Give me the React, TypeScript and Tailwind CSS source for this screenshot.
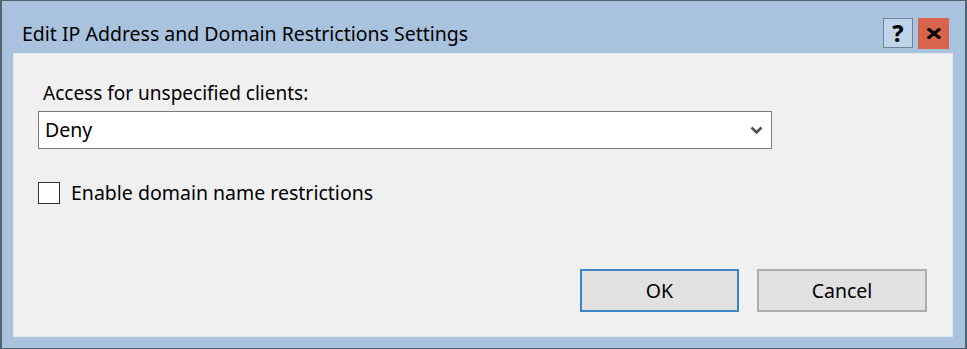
import React from "react";

export default function App() {
  const font = { fontFamily: '"Noto Sans", "Open Sans", sans-serif' };
  return (
    <div
      className="w-[967px] h-[349px] bg-[#a9c3df] border-l-2 border-t border-r-2 border-b border-[#53636f] flex flex-col text-black"
      style={font}
    >
      <div className="h-[52px] flex items-center pl-[20px] pr-[16px] shrink-0">
        <div className="text-[19.5px] leading-none mt-[13px] flex-1">Edit IP Address and Domain Restrictions Settings</div>
        <div className="flex items-center gap-[5px] mt-[12px]">
          <div className="w-[30px] h-[30px] border border-[#6e859e] bg-[#c0d4ea] flex items-center justify-center text-[23px] font-extrabold leading-none">
            ?
          </div>
          <div className="w-[31px] h-[31px] bg-[#d8644d] flex items-center justify-center">
            <svg width="14" height="11" viewBox="0 0 14 11">
              <path d="M2 1.5 L12 9.5 M12 1.5 L2 9.5" stroke="#000" strokeWidth="3.2" strokeLinecap="square" />
            </svg>
          </div>
        </div>
      </div>
      <div className="flex-1 ml-[11px] mr-[12px] mb-[11px] bg-[#f0f0f0] border border-[#dfe7f0] flex flex-col pl-[24px] pr-[25px] pb-[24px]">
        <div className="mt-[26px] ml-[5px] h-[26px] text-[19px] leading-[26px]">Access for unspecified clients:</div>
        <div className="mt-[5px] w-[734px] h-[38px] bg-white border border-[#7a7a7a] flex items-center pl-[6px] pr-[8px]">
          <span className="flex-1 text-[19.5px] leading-none">Deny</span>
          <svg width="13" height="9" viewBox="0 0 13 9">
            <path d="M1.5 1.5 L6.5 6.5 L11.5 1.5" stroke="#505050" strokeWidth="2.6" fill="none" />
          </svg>
        </div>
        <div className="mt-[33px] flex items-center">
          <div className="w-[22px] h-[22px] border border-[#333333] bg-white" />
          <span className="ml-[11px] text-[19.5px] leading-none">Enable domain name restrictions</span>
        </div>
        <div className="mt-auto flex justify-end gap-[18px]">
          <button className="w-[159px] h-[43px] bg-[#e1e1e1] border-2 border-[#3d84c4] text-[19.5px] leading-none" style={font}>
            OK
          </button>
          <button className="w-[170px] h-[43px] bg-[#e1e1e1] border-2 border-[#adadad] text-[19.5px] leading-none" style={font}>
            Cancel
          </button>
        </div>
      </div>
    </div>
  );
}
